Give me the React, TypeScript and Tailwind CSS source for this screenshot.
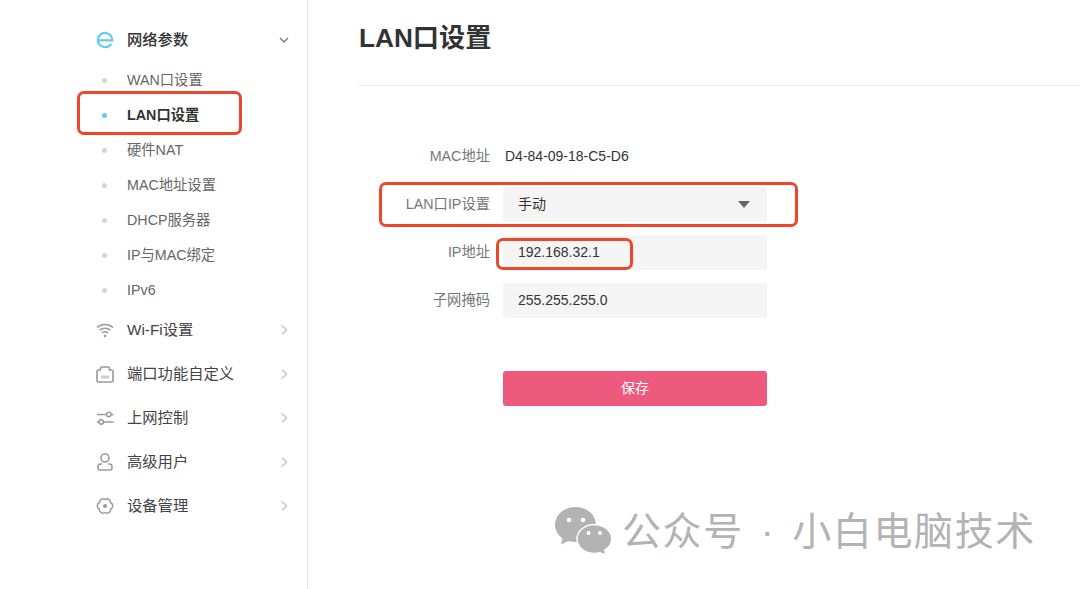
const subItems = ["WAN口设置", "LAN口设置", "硬件NAT", "MAC地址设置", "DHCP服务器", "IP与MAC绑定", "IPv6"];

function Chevron({ down }: { down?: boolean }) {
  return (
    <svg width="12" height="12" viewBox="0 0 12 12" fill="none" stroke={down ? "#777" : "#c4c4c4"} strokeWidth="1.3">
      {down ? <path d="M2 4l4 4 4-4" /> : <path d="M4 1.500l4.500 4.500L4 10.500" />}
    </svg>
  );
}

function LogoIcon() {
  return (
    <svg width="18" height="18" viewBox="0 0 18 18" fill="none" stroke="#66cbec" strokeWidth="2.200">
      <path d="M1.800 9.300h14.500c.1-4.200-3.200-7.500-7.300-7.500a7.200 7.200 0 1 0 0 14.400c2.700 0 5-1 6.300-3" />
    </svg>
  );
}

function WifiIcon() {
  return (
    <svg width="18" height="15" viewBox="0 0 18 15" fill="none" stroke="#9a9a9a" strokeWidth="1.500">
      <path d="M1 4.500c4.500-4 11.500-4 16 0" />
      <path d="M3.500 7.300c3-2.700 8-2.700 11 0" />
      <path d="M6 10c1.700-1.400 4.300-1.400 6 0" />
      <circle cx="9" cy="13" r="1.300" fill="#9a9a9a" stroke="none" />
    </svg>
  );
}

function PortIcon() {
  return (
    <svg width="18" height="17" viewBox="0 0 18 17" fill="none" stroke="#9a9a9a" strokeWidth="1.600">
      <path d="M1 15V5.500Q1 4 2.500 4H4.500V2.500Q4.500 1 6 1H12Q13.500 1 13.500 2.500V4H15.500Q17 4 17 5.500V15Q17 16 16 16H2Q1 16 1 15z" />
      <path d="M6 9.500v3M8 9.500v3M10 9.500v3M12 9.500v3" strokeWidth="1" />
    </svg>
  );
}

function SlidersIcon() {
  return (
    <svg width="18" height="15" viewBox="0 0 18 15" fill="none" stroke="#9a9a9a" strokeWidth="1.500">
      <path d="M1 3.500h9.500M15 3.500h2.500M1 11h2M7.500 11h10" />
      <circle cx="12.800" cy="3.500" r="2.200" />
      <circle cx="5.200" cy="11" r="2.200" />
    </svg>
  );
}

function UserIcon() {
  return (
    <svg width="18" height="18" viewBox="0 0 18 18" fill="none" stroke="#9a9a9a" strokeWidth="1.600">
      <circle cx="9" cy="5" r="4" />
      <path d="M6 11H4.500A2.700 2.700 0 0 0 2 13.700V15c0 1.200.8 2 2 2h10c1.200 0 2-.8 2-2v-1.300a2.700 2.700 0 0 0-2.500-2.700H12" />
    </svg>
  );
}

function GearIcon() {
  return (
    <svg width="18" height="18" viewBox="0 0 18 18" fill="none" stroke="#9a9a9a" strokeWidth="1.500">
      <path d="M9 2.500A3.600 3.600 0 0 1 14.600 5.700A3.600 3.600 0 0 1 14.600 12.300A3.600 3.600 0 0 1 9 15.500A3.600 3.600 0 0 1 3.400 12.300A3.600 3.600 0 0 1 3.400 5.700A3.600 3.600 0 0 1 9 2.500z" />
      <circle cx="9" cy="9" r="2" fill="#9a9a9a" stroke="none" />
    </svg>
  );
}

function WechatIcon() {
  return (
    <svg width="57" height="48" viewBox="0 0 57 48" className="shrink-0">
      <path d="M20.500 0C9.200 0 0 7.900 0 17.700c0 5.500 2.900 10.400 7.500 13.700L6 37.500l7.500-3.500c2.200.7 4.500 1 7 1C31.800 35 41 27.300 41 17.700 41 7.900 31.800 0 20.500 0z" fill="#b3b3b3" />
      <path d="M39.500 17.500C29.800 17.500 22 24 22 32s7.800 14.500 17.500 14.500c1.800 0 3.600-.2 5.300-.7l6.200 2.200-1.200-4.800c4.200-2.700 7-6.900 7-11.200 0-8-8-14.500-17.800-14.500z" fill="#b3b3b3" stroke="#fff" strokeWidth="1.500" />
      <circle cx="14" cy="13" r="2.300" fill="#fff" />
      <circle cx="28" cy="13" r="2.300" fill="#fff" />
      <circle cx="33.500" cy="26" r="2" fill="#fff" />
      <circle cx="45" cy="26" r="2" fill="#fff" />
    </svg>
  );
}

const groups = [
  { label: "Wi-Fi设置", icon: <WifiIcon /> },
  { label: "端口功能自定义", icon: <PortIcon /> },
  { label: "上网控制", icon: <SlidersIcon /> },
  { label: "高级用户", icon: <UserIcon /> },
  { label: "设备管理", icon: <GearIcon /> },
];

export default function App() {
  return (
    <div className="relative flex h-[589px] w-[1080px] overflow-hidden bg-white text-[14px] text-[#333] font-['Liberation_Sans','Noto_Sans_CJK_SC',sans-serif]">
      <aside className="w-[308px] shrink-0 border-r border-[#e8e8e8] pl-[96px] pr-[17px] pt-[18px]">
        <div className="flex h-[44px] items-center">
          <span className="flex w-[31px] shrink-0"><LogoIcon /></span>
          <span className="flex-1 font-medium text-[15.300px]">网络参数</span>
          <Chevron down />
        </div>
        <ul className="mt-px">
          {subItems.map((s) => {
            const on = s === "LAN口设置";
            return (
              <li key={s} className={`flex h-[35px] items-center text-[14.300px] ${on ? "font-bold text-[#333]" : "text-[#666]"}`}>
                <span className="flex w-[31px] shrink-0 pl-[6px]">
                  <span className={`size-[5px] rounded-full ${on ? "bg-[#66cbec]" : "bg-[#d4d4d4]"}`} />
                </span>
                {s}
              </li>
            );
          })}
        </ul>
        {groups.map((g) => (
          <div key={g.label} className="flex h-[44px] items-center">
            <span className="flex w-[31px] shrink-0">{g.icon}</span>
            <span className="flex-1 text-[15.300px] text-[#444]">{g.label}</span>
            <Chevron />
          </div>
        ))}
      </aside>

      <main className="flex-1 pl-[50px]">
        <h1 className="flex h-[86px] items-center border-b border-[#ebebeb] pb-[8px] pl-px text-[26.200px] font-bold text-[#333]">LAN口设置</h1>
        <div className="mt-[49px] flex flex-col">
          <div className="flex h-[40px] items-center">
            <label className="w-[132px] pt-px text-right text-[14.300px] leading-[20px] text-[#777]">MAC地址</label>
            <span className="ml-[15px] pt-px leading-[20px] text-[#333]">D4-84-09-18-C5-D6</span>
          </div>
          <div className="mt-[12px] flex items-center">
            <label className="w-[132px] text-right text-[14.300px] text-[#777]">LAN口IP设置</label>
            <div className="ml-[13px] flex h-[35px] w-[264px] items-center justify-between rounded-[3px] bg-[#f5f5f5] pl-[15px] pr-[17px]">
              <span>手动</span>
              <span className="h-0 w-0 border-x-[6px] border-t-[7px] border-x-transparent border-t-[#666]" />
            </div>
          </div>
          <div className="mt-[13px] flex items-center">
            <label className="w-[132px] text-right text-[14.300px] text-[#777]">IP地址</label>
            <div className="ml-[13px] flex h-[35px] w-[264px] items-center rounded-[3px] bg-[#f5f5f5] pl-[15px]">192.168.32.1</div>
          </div>
          <div className="mt-[13px] flex items-center">
            <label className="w-[132px] text-right text-[14.300px] text-[#777]">子网掩码</label>
            <div className="ml-[13px] flex h-[35px] w-[264px] items-center rounded-[3px] bg-[#f5f5f5] pl-[15px]">255.255.255.0</div>
          </div>
          <button className="ml-[145px] mt-[53px] h-[35px] w-[264px] rounded-[3px] bg-[#ee5a7e] text-white">保存</button>
        </div>
      </main>

      {/* red annotation boxes drawn over the page */}
      <div className="absolute left-[77px] top-[91px] h-[44px] w-[165px] rounded-[7px] border-[3px] border-[#ee4628]" />
      <div className="absolute left-[379px] top-[182px] h-[45px] w-[419px] rounded-[7px] border-[3px] border-[#ee4628]" />
      <div className="absolute left-[496px] top-[238px] h-[32px] w-[137px] rounded-[7px] border-[3px] border-[#ee4628]" />

      {/* watermark */}
      <div className="absolute left-[555px] top-[505px] flex items-center gap-[10px] whitespace-nowrap text-[39px] leading-[48px] tracking-[1.600px] [word-spacing:4.500px] text-[#b3b3b3] font-['Liberation_Sans','Noto_Sans_CJK_SC',sans-serif]">
        <WechatIcon />
        <span className="pt-[3px]">公众号 · 小白电脑技术</span>
      </div>
    </div>
  );
}
